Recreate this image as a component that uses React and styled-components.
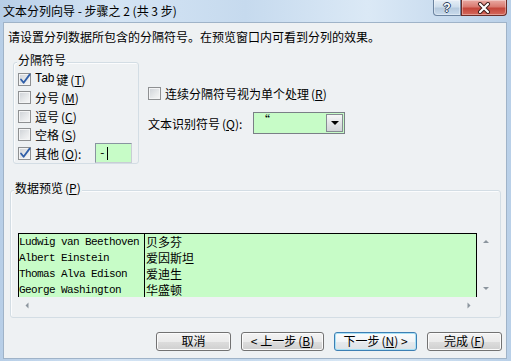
import React from 'react'
import styled, { createGlobalStyle } from 'styled-components'

const CJK = `"Noto Sans CJK SC", "Liberation Sans", sans-serif`
const MONO = `"Liberation Mono", "DejaVu Sans Mono", monospace`
const FACE = '#eef1f3'
const GREEN = '#c7fcc7'

const GlobalStyle = createGlobalStyle`
  html, body {
    margin: 0;
    padding: 0;
  }
  body {
    width: 511px;
    height: 361px;
    overflow: hidden;
    font-family: ${CJK};
    font-size: 12px;
    color: #000;
  }
`

const Window = styled.div`
  width: 511px;
  height: 361px;
  box-sizing: border-box;
  display: flex;
  flex-direction: column;
  padding: 0 4px 2px 3px;
  background: linear-gradient(90deg, #b7cee7 0%, #d4e4f4 22%, #c6daee 48%, #dbe9f6 72%, #b9d0e8 100%);
`

const TitleBar = styled.div`
  height: 22px;
  display: flex;
  align-items: flex-start;
  flex-shrink: 0;
`

const Title = styled.div`
  line-height: 21px;
  font-size: 12px;
  color: #000;
  white-space: nowrap;
`

const Controls = styled.div`
  margin-left: auto;
  display: flex;
`

const CaptionButton = styled.div`
  height: 16px;
  width: ${p => (p.$close ? 46 : 28)}px;
  box-sizing: border-box;
  display: flex;
  align-items: center;
  justify-content: center;
  border: 1px solid ${p => (p.$close ? '#6b2d28' : '#6c84a0')};
  border-top: none;
  border-radius: ${p => (p.$close ? '0 0 4px 0' : '0 0 0 4px')};
  background: ${p =>
    p.$close
      ? 'linear-gradient(#e9aaa4 0%, #d97a70 45%, #c4463b 55%, #d5695c 100%)'
      : 'linear-gradient(#e6eef6 0%, #cfdeec 45%, #b6cade 55%, #c9dbec 100%)'};
  box-shadow: inset 0 0 0 1px rgba(255, 255, 255, 0.35);
`

const HelpGlyph = styled.span`
  font-family: "Liberation Sans", sans-serif;
  font-weight: bold;
  font-size: 12px;
  line-height: 14px;
  color: #fff;
  text-shadow: 1px 0 0 #2c4160, -1px 0 0 #2c4160, 0 1px 0 #2c4160, 0 -1px 0 #2c4160;
`

const Client = styled.div`
  flex: 1;
  box-sizing: border-box;
  border: 1px solid #9fb3c8;
  background: ${FACE};
  padding: 7px 0 0 4px;
  display: flex;
  flex-direction: column;
`

const Description = styled.div`
  line-height: 14px;
  white-space: nowrap;
`

const TopRow = styled.div`
  display: flex;
  align-items: flex-start;
  margin-top: 18px;
`

const Group = styled.div`
  position: relative;
  box-sizing: border-box;
  border: 1px solid #d3dde4;
  border-radius: 3px;
  box-shadow: inset 1px 1px 0 #fbfcfd;
`

const DelimGroup = styled(Group)`
  width: 126px;
  margin-left: 5px;
  padding: 7px 6px 0 4px;
`

const GroupTitle = styled.div`
  position: absolute;
  top: -10px;
  left: 3px;
  padding: 0 1px;
  line-height: 14px;
  background: ${FACE};
  white-space: nowrap;
`

const OptRow = styled.div`
  display: flex;
  align-items: center;
  height: ${p => p.$h || 18.5}px;
  white-space: nowrap;
`

const Key = styled.span`
  margin-left: 2px;
`

const Box = styled.span`
  width: 13px;
  height: 13px;
  box-sizing: border-box;
  flex-shrink: 0;
  border: 1px solid #8e9092;
  background: linear-gradient(135deg, #cdd1d6 0%, #e6e8ea 55%, #f8f8f8 100%);
  box-shadow: inset 0 0 0 1px #f3f4f5;
  margin-right: 4px;
  position: relative;

  svg {
    position: absolute;
    left: 0;
    top: -1px;
  }
`

const Mono = styled.span`
  font-family: ${MONO};
  font-size: 12px;
  letter-spacing: -1px;
`

const Checkbox = ({ checked }) => (
  <Box>
    {checked && (
      <svg width="12" height="12" viewBox="0 0 12 12">
        <path d="M2 6.5 L4.6 9.8 L10.6 1.6" fill="none" stroke="#2f5ea8" strokeWidth="1.8" strokeLinecap="round" strokeLinejoin="round" />
      </svg>
    )}
  </Box>
)

const OtherInput = styled.div`
  margin-left: auto;
  width: 37px;
  height: 20px;
  box-sizing: border-box;
  border: 1px solid #8894a0;
  border-right-color: #c8ced4;
  border-bottom-color: #c8ced4;
  background: ${GREEN};
  display: flex;
  align-items: center;
  padding-left: 3px;
  font-family: ${MONO};
  font-size: 11px;
`

const Caret = styled.span`
  width: 1px;
  height: 13px;
  background: #000;
  margin-left: 1px;
`

const RightCol = styled.div`
  margin-left: 9px;
  padding-top: 22px;
  display: flex;
  flex-direction: column;
`

const SelectRow = styled.div`
  display: flex;
  align-items: center;
  margin-top: 10px;
`

const SelectLabel = styled.span`
  width: 105px;
  white-space: nowrap;
`

const Select = styled.div`
  width: 92px;
  height: 22px;
  box-sizing: border-box;
  border: 1px solid #7a7f86;
  background: ${GREEN};
  display: flex;
`

const SelectValue = styled.div`
  flex: 1;
  padding: 0 4px;
  line-height: 14px;
  font-size: 12px;
`

const DropButton = styled.div`
  width: 17px;
  box-sizing: border-box;
  border: 1px solid #868b92;
  margin: 1px;
  background: linear-gradient(#f7f7f7, #e2e4e6 50%, #d2d5d8);
  display: flex;
  align-items: center;
  justify-content: center;
`

const Triangle = styled.span`
  width: 0;
  height: 0;
  border-left: ${p => p.$s || 4}px solid transparent;
  border-right: ${p => p.$s || 4}px solid transparent;
  border-top: ${p => p.$s || 4}px solid ${p => p.$c || '#000'};
  transform: rotate(${p => p.$r || 0}deg);
`

const PreviewGroup = styled(Group)`
  width: 491px;
  margin: 26px 0 0 2px;
  padding: 42px 6px 3px 7px;
`

const PreviewBody = styled.div`
  display: grid;
  grid-template-columns: 459px 17px;
  grid-template-rows: 64px 17px;
`

const DataGrid = styled.div`
  box-sizing: border-box;
  border: 1px solid #000;
  border-bottom: none;
  background: ${GREEN};
  overflow: hidden;
`

const DataRow = styled.div`
  display: flex;
  height: 16px;
`

const NameCell = styled.div`
  width: 125px;
  border-right: 1px solid #000;
  font-family: ${MONO};
  font-size: 11px;
  letter-spacing: -0.6px;
  line-height: 16px;
  white-space: nowrap;
  overflow: hidden;
`

const ValueCell = styled.div`
  flex: 1;
  padding-left: 1px;
  font-size: 12px;
  line-height: 16px;
  white-space: nowrap;
`

const ScrollTrack = styled.div`
  display: flex;
  flex-direction: ${p => (p.$horizontal ? 'row' : 'column')};
  justify-content: space-between;
  background: ${FACE};
`

const ArrowCell = styled.div`
  width: 17px;
  height: 17px;
  display: flex;
  align-items: center;
  justify-content: center;
`

const Corner = styled.div`
  background: ${FACE};
`

const ButtonRow = styled.div`
  display: flex;
  justify-content: flex-end;
  gap: 10px;
  margin: 14px 4px 0 0;
`

const Button = styled.div`
  width: ${p => p.$w}px;
  height: 19px;
  box-sizing: border-box;
  border: 1px solid ${p => (p.$focus ? '#3d7fb3' : '#727272')};
  border-radius: 3px;
  background: ${p =>
    p.$focus
      ? 'linear-gradient(#fbfcfd 0%, #f1f4f6 50%, #e6eaee 51%, #dde2e6 100%)'
      : 'linear-gradient(#f3f3f3 0%, #ebebeb 50%, #dddddd 51%, #cfcfcf 100%)'};
  box-shadow: inset 0 0 0 1px ${p => (p.$focus ? '#a9e1f6' : '#fbfbfb')};
  display: flex;
  align-items: center;
  justify-content: center;
  line-height: 14px;
  white-space: nowrap;
`

const rows = [
  ['Ludwig van Beethoven', '贝多芬'],
  ['Albert Einstein', '爱因斯坦'],
  ['Thomas Alva Edison', '爱迪生'],
  ['George Washington', '华盛顿'],
]

const App = () => (
  <Window>
    <GlobalStyle />
    <TitleBar>
      <Title>文本分列向导 - 步骤之 2 (共 3 步)</Title>
      <Controls>
        <CaptionButton>
          <HelpGlyph>?</HelpGlyph>
        </CaptionButton>
        <CaptionButton $close>
          <svg width="14" height="12" viewBox="0 0 14 12">
            <path d="M3 2 L11 10 M11 2 L3 10" stroke="#3b1a18" strokeWidth="4" strokeLinecap="round" />
            <path d="M3 2 L11 10 M11 2 L3 10" stroke="#fff" strokeWidth="2.2" strokeLinecap="round" />
          </svg>
        </CaptionButton>
      </Controls>
    </TitleBar>
    <Client>
      <Description>请设置分列数据所包含的分隔符号。在预览窗口内可看到分列的效果。</Description>
      <TopRow>
        <DelimGroup>
          <GroupTitle>分隔符号</GroupTitle>
          <OptRow>
            <Checkbox checked />
            <Mono>Tab</Mono>&nbsp;键<Key>(<u>T</u>)</Key>
          </OptRow>
          <OptRow>
            <Checkbox />
            分号<Key>(<u>M</u>)</Key>
          </OptRow>
          <OptRow>
            <Checkbox />
            逗号<Key>(<u>C</u>)</Key>
          </OptRow>
          <OptRow>
            <Checkbox />
            空格<Key>(<u>S</u>)</Key>
          </OptRow>
          <OptRow>
            <Checkbox checked />
            其他<Key>(<u>O</u>):</Key>
            <OtherInput>
              -<Caret />
            </OtherInput>
          </OptRow>
        </DelimGroup>
        <RightCol>
          <OptRow $h={18}>
            <Checkbox />
            连续分隔符号视为单个处理<Key>(<u>R</u>)</Key>
          </OptRow>
          <SelectRow>
            <SelectLabel>文本识别符号<Key>(<u>Q</u>):</Key></SelectLabel>
            <Select>
              <SelectValue>“</SelectValue>
              <DropButton>
                <Triangle $s={4} />
              </DropButton>
            </Select>
          </SelectRow>
        </RightCol>
      </TopRow>
      <PreviewGroup>
        <GroupTitle>数据预览<Key>(<u>P</u>)</Key></GroupTitle>
        <PreviewBody>
          <DataGrid>
            {rows.map(([name, value]) => (
              <DataRow key={name}>
                <NameCell>{name}</NameCell>
                <ValueCell>{value}</ValueCell>
              </DataRow>
            ))}
          </DataGrid>
          <ScrollTrack>
            <ArrowCell>
              <Triangle $s={3} $c="#8b959e" $r={180} />
            </ArrowCell>
            <ArrowCell>
              <Triangle $s={3} $c="#8b959e" />
            </ArrowCell>
          </ScrollTrack>
          <ScrollTrack $horizontal>
            <ArrowCell>
              <Triangle $s={3} $c="#8b959e" $r={90} />
            </ArrowCell>
            <ArrowCell>
              <Triangle $s={3} $c="#8b959e" $r={-90} />
            </ArrowCell>
          </ScrollTrack>
          <Corner />
        </PreviewBody>
      </PreviewGroup>
      <ButtonRow>
        <Button $w={75}>取消</Button>
        <Button $w={83}>&lt; 上一步<Key>(<u>B</u>)</Key></Button>
        <Button $w={83} $focus>下一步<Key>(<u>N</u>)</Key>&nbsp;&gt;</Button>
        <Button $w={75}>完成<Key>(<u>F</u>)</Key></Button>
      </ButtonRow>
    </Client>
  </Window>
)

export default App
